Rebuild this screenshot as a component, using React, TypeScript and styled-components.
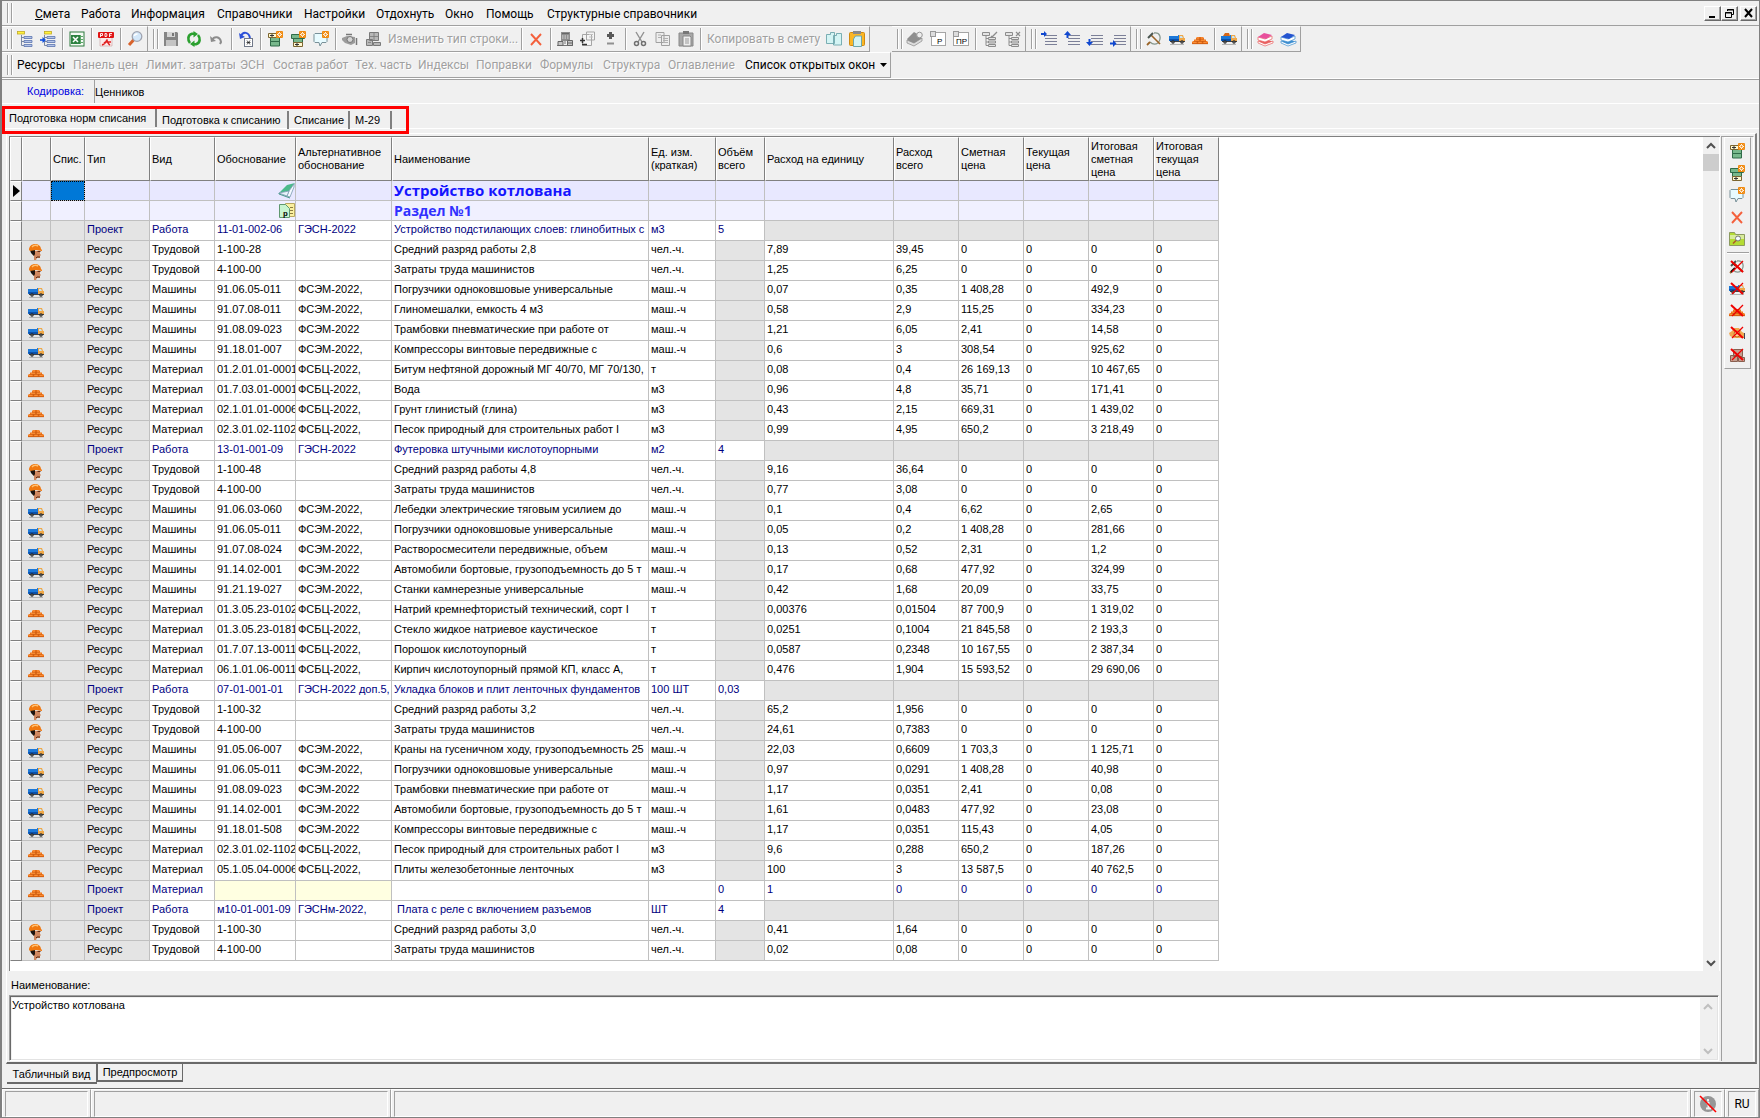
import React from "react";
import styled, { createGlobalStyle, css } from "styled-components";

const uiFont = `Roboto, "Open Sans", "Noto Sans", sans-serif`;
const gridFont = `"Liberation Sans", Arial, sans-serif`;

const Global = createGlobalStyle`
  *, *::before, *::after { box-sizing: border-box; }
  body { margin: 0; background: #f0f0f0; color: #000; font: 11px/14px ${gridFont}; }
  button, input, textarea { font: inherit; color: inherit; }
  button { border: 0; padding: 0; margin: 0; background: none; }
`;

/* ---------- icons ---------- */

const Svg = styled.svg`
  display: block;
  width: 16px;
  height: 16px;
  flex: none;
  overflow: visible;
`;

const CrossOut = () => (
  <>
    <path d="M2 2l12 11" stroke="#f00000" strokeWidth="2" />
    <path d="M14 2L3 13" stroke="#f00000" strokeWidth="1.2" />
  </>
);

const Star = () => (
  <>
    <rect x="9" y="0" width="7" height="7" rx="1" fill="#f08a10" />
    <path d="M12.500 1v5M10 3.500h5M10.800 1.800l3.400 3.400M14.200 1.800l-3.400 3.400" stroke="#fff" strokeWidth=".9" />
    <circle cx="12.500" cy="3.500" r="1" fill="#f08a10" />
  </>
);

const Truck = () => (
  <>
    <path d="M0 5h9V4h1v6H0z" fill="#1c78d8" />
    <path d="M0 8h10v2H1z" fill="#0c50a8" />
    <path d="M10 4h4l1 3h1v3h-6z" fill="#f0a848" />
    <path d="M11 5h2l1 2h-3z" fill="#c8e4f4" />
    <path d="M1 10h15v1H1z" fill="#404040" />
    <circle cx="4" cy="11" r="1.700" fill="#222" />
    <circle cx="13" cy="11" r="1.700" fill="#222" />
    <circle cx="4" cy="11" r=".6" fill="#ddd" />
    <circle cx="13" cy="11" r=".6" fill="#ddd" />
    <path d="M1 13.500h14" stroke="#b4b4b4" />
  </>
);

const Bricks = () => (
  <>
    <path d="M0 13v-2l1-1h1V8.500h2V7l1-1h6l1 1v1.500h2V10h1l1 1v2z" fill="#f4781c" />
    <path d="M0 12.700h16M2 10.400h12M4 8.300h8" stroke="#c05410" strokeWidth=".7" />
    <path d="M5.300 10.500v2M10.700 10.500v2M8 8.500v2M8 6v2" stroke="#c05410" strokeWidth=".7" />
    <path d="M1 11.300h3.500M6.500 11.300h3M11.500 11.300h3M3 9.200h4M9 9.200h4M5 7h2M9 7h2" stroke="#ff9c48" strokeWidth=".8" />
  </>
);

const Hammer = () => (
  <>
    <path d="M8 2c6-1 8 5 4 10-3 2-6 1-8-1" fill="none" stroke="#86978e" strokeWidth="1.300" />
    <path d="M5 4l9 9" stroke="#9a6428" strokeWidth="1.600" />
    <path d="M2 7l5-5" stroke="#4a5550" strokeWidth="2" />
    <path d="M4 11l-3 3" stroke="#9a6428" strokeWidth="1.800" />
  </>
);

const Rows = ({ last }: { last?: boolean }) => (
  <>
    <path d={last ? "M1.500 3.500h13v4h-13zM3.500 7.500h9v4h-9z" : "M3.500 6.500h9v4h-9zM3.500 10.500h9v4.500h-9z"} fill="#78b88c" stroke="#2f6b48" />
    <path d={last ? "M3.500 11.500h9v4h-9z" : "M1.500 2.500h13v4h-13z"} fill="#fff8d0" stroke="#7c6530" />
    <path d={last ? "M5 13.500h4M7 12v3" : "M3 4.500h4M5 3v3"} stroke="#333" />
    <Star />
  </>
);

const Worker = () => (
  <>
    <path d="M5 7h7v3l1 1-1 1v2H9l-1 2H6v-4L4 10z" fill="#d08860" />
    <path d="M2 6h5v4l-1 2-3-3z" fill="#1c1410" />
    <path d="M1 6c0-4 3-6 6-6s6 2 6 5l1 1v1l-6-1-6 1z" fill="#f07810" />
    <path d="M4 3c2-2 4-2 6-1" stroke="#ffc070" strokeWidth="1.500" fill="none" />
    <path d="M9.500 7.500h3M8 14l1-1h3" stroke="#5c2c18" fill="none" />
  </>
);

const Books = ({ a, b }: { a: string; b: string }) => (
  <>
    <path d="M1 10l7 4 8-3-7-3z" fill={b} />
    <path d="M1 10v2l7 3 8-3v-2l-8 3z" fill="#fff" stroke={b} strokeWidth=".7" />
    <path d="M1 6v3l7 2 7-3V5l-7 3z" fill="#fff" stroke={b} strokeWidth=".7" />
    <path d="M1 6l6-4 8 2-6 4z" fill={a} />
  </>
);

const Tree = ({ dx = 0 }: { dx?: number }) => (
  <>
    <path d="M7 5.500h8v2H7zM7 9.500h8v2H7zM7 13.500h8v2H7z" fill="#b4c4e8" stroke="#5a74b0" strokeWidth=".8" />
    <path d="M4.500 4v10.500H7M4.500 6.500H7M4.500 10.500H7" stroke="#6c7c9c" strokeWidth=".9" fill="none" />
    <rect x={0.5 + dx} y=".5" width="7" height="2.500" fill="#fff23c" stroke="#c0a828" strokeWidth=".8" />
  </>
);

const GrayTree = () => (
  <>
    <path d="M.5 1.500h7v3h-7zM6.500 6.500h7v2h-7zM6.500 10h7v2h-7zM6.500 13.500h7v2h-7z" fill="#e4e4e4" stroke="#8c8c8c" />
    <path d="M4 5v9.500h2M4 7.500h2M4 11h2" stroke="#8c8c8c" fill="none" />
  </>
);

const Lines = () => <path d="M4 4.500h12M4 7.500h12M4 10.500h12M4 13.500h12" stroke="#7c8098" />;

const icons: Record<string, React.ReactNode> = {
  tree: <Tree />,
  treeIn: (
    <>
      <Tree dx={4} />
      <path d="M0 9h4" stroke="#1050e0" strokeWidth="1.600" />
      <path d="M2.500 6l3.500 3-3.500 3z" fill="#1050e0" />
    </>
  ),
  excel: (
    <>
      <rect x="1" y="1" width="14" height="14" fill="#f5fbf5" stroke="#2c7a3c" />
      <path d="M2 4h9v9H2z" fill="#2c8240" />
      <path d="M4 6l5 5M9 6l-5 5" stroke="#fff" strokeWidth="1.500" />
      <path d="M11.500 4v9M11.500 5.500H14M11.500 8.500H14M11.500 11.500H14" stroke="#5ba568" />
    </>
  ),
  pdf: (
    <>
      <path d="M2 6h12v9H2z" fill="#fbe9e9" stroke="#c9a0a0" strokeWidth=".6" />
      <rect x="0" y="1" width="16" height="6" rx="1" fill="#e01414" />
      <path d="M2.500 6V2.500h2v2h-2M7 2.500v3h1.500l.5-1.500-.5-1.500zM11.500 6V2.500h2.500M11.500 4.300h2" stroke="#fff" fill="none" strokeWidth=".9" />
      <path d="M4 14c4-1 5-6 5-5s1 4 3 5M6 12c2-2 5-1 7-1" fill="none" stroke="#e02020" strokeWidth="1.500" />
    </>
  ),
  lens: (
    <>
      <path d="M7 8.500L2 14" stroke="#d8622c" strokeWidth="3" />
      <circle cx="10" cy="5.500" r="4.800" fill="#d4e8fa" stroke="#a0a4b0" strokeWidth="1.300" />
      <path d="M7.500 5c0-1 1-2 3-2" stroke="#fff" fill="none" strokeWidth="1.500" />
    </>
  ),
  save: (
    <>
      <path d="M1 1h13l1 1v13H1z" fill="#858585" />
      <path d="M4 1h8v5H4z" fill="#d5d5d5" />
      <path d="M3 9h10v6H3z" fill="#c4c4c4" />
      <path d="M9 2h2v3H9z" fill="#777" />
    </>
  ),
  refresh: (
    <>
      <path d="M8 2.800H6C1.500 4 1.500 9 4 12M8 13.200h2c4.500-1.200 4.500-6.200 2-9.200" fill="none" stroke="#2ba02f" strokeWidth="2.600" />
      <path d="M7.500 0l4.500 3-4.500 3.500zM8.500 9.500L4 13l4.500 3z" fill="#2ba02f" />
    </>
  ),
  undo: (
    <>
      <path d="M3 9c2-4 8-4 9 2l-1 2" fill="none" stroke="#8c8c8c" strokeWidth="2" />
      <path d="M1 5l1 6 5-1z" fill="#8c8c8c" />
    </>
  ),
  undoBox: (
    <>
      <path d="M3 5c2-5 8-4 9 2" fill="none" stroke="#2c50d8" strokeWidth="2" />
      <path d="M1 2l1 6 5-2z" fill="#2c50d8" />
      <rect x="6.500" y="7.500" width="8" height="8" fill="#fff" stroke="#707888" />
      <path d="M8.500 11.500h4M9 9.500l3 4M12 9.500l-3 4" stroke="#222" strokeWidth=".8" />
    </>
  ),
  rowAbove: <Rows />,
  rowBelow: <Rows last />,
  note: (
    <>
      <path d="M2 2.500h11l1 1v7l-1 1H9l-2 3.500-1-3.500H2l-1-1v-7z" fill="#e8fbff" stroke="#789098" />
      <Star />
    </>
  ),
  hand: (
    <>
      <path d="M0 7l5-2 8 1v6l-4 2-6-2-3-3z" fill="#9c9c9c" />
      <circle cx="8" cy="8.500" r="3" fill="#d4d4d4" stroke="#777" />
      <path d="M4 3.500h6M14.500 7v7" stroke="#777" strokeWidth="1.500" />
    </>
  ),
  bricksGray: (
    <>
      <path d="M4.500 1.500h9v8h-9zM1.500 8.500h6v6h-6zM8.500 11.500h7v3h-7z" fill="#b8b8b8" stroke="#7a7a7a" />
      <path d="M9 2v7M5 5.500h8M3 11.500h3" stroke="#7a7a7a" strokeWidth=".8" />
    </>
  ),
  x: <path d="M3 3l10 11M13 3L3 14" stroke="#f4603c" strokeWidth="1.900" fill="none" />,
  calc: (
    <>
      <path d="M4 1h9v9H4z" fill="#8c8c8c" />
      <path d="M5 2.500h7" stroke="#666" />
      <path d="M5 5h7M5 7h7" stroke="#ddd" strokeDasharray="1.500 1" />
      <path d="M8 10v3M0 14.500h16" stroke="#777" />
      <path d="M1 10.500h5v4H1zM10.500 9.500h5v5h-5zM10.500 12h5" fill="#c4c4c4" stroke="#666" />
    </>
  ),
  docs: (
    <>
      <path d="M2.500 3.500h9v11h-9zM6.500 1h8v8h-8z" fill="#f4f4f4" stroke="#a5a5a5" />
      <path d="M9 3.500h4M9 6h4" stroke="#c0c0c0" />
      <path d="M2.500 7v5M0 9.500h5M2 13.500h5" stroke="#333" strokeWidth="1.500" />
    </>
  ),
  plusMinus: (
    <>
      <path d="M7.500 1v7M4 4.500h7" stroke="#585858" strokeWidth="3" />
      <path d="M4 12.500h7" stroke="#909090" strokeWidth="2" />
    </>
  ),
  cut: (
    <>
      <path d="M4 1l6 10M12 1L6 11" stroke="#909090" strokeWidth="1.400" />
      <circle cx="4.500" cy="12.500" r="2" fill="none" stroke="#707070" strokeWidth="1.500" />
      <circle cx="11.500" cy="12.500" r="2" fill="none" stroke="#707070" strokeWidth="1.500" />
    </>
  ),
  copy: (
    <>
      <path d="M1 1.500h8v10H1zM6.500 4.500h8v10h-8z" fill="#ededed" stroke="#a0a0a0" />
      <path d="M3 4h3M3 6.500h3M8 7.500h5M8 9.500h5M8 11.500h5" stroke="#b0b0b0" />
    </>
  ),
  paste: (
    <>
      <path d="M1 2h14v13H1z" fill="#a8a8a8" stroke="#888" />
      <path d="M5 0h6v3H5z" fill="#777" />
      <path d="M5 5h7l1 1v9H5z" fill="#eee" stroke="#888" />
      <path d="M7 8h4M7 10h4M7 12h4" stroke="#999" />
    </>
  ),
  copyColor: (
    <path d="M.5 3.500h4v-2h4v11h-8zM7.500 4.500h3v-2h5v11.500h-8z" fill="#d4f4f4" stroke="#6ea6ac" strokeWidth=".9" />
  ),
  pasteColor: (
    <>
      <rect x=".5" y="1.500" width="15" height="13" rx="1" fill="#fbb726" stroke="#d08a10" />
      <path d="M4 0h8v3H4z" fill="#8a8a8a" />
      <path d="M4.500 8l2-3h6v10.500h-8z" fill="#d4f4f4" stroke="#6ea6ac" />
    </>
  ),
  pack: (
    <>
      <path d="M0 8l7-7 5 3 3 4-7 6-5-2z" fill="#8f8f8f" />
      <path d="M0 9l7 3 8-5v3l-8 5-7-3z" fill="#ddd" stroke="#888" strokeWidth=".7" />
      <circle cx="12.500" cy="4" r="2.800" fill="#eee" stroke="#999" />
    </>
  ),
  sheetP: (
    <>
      <rect x="1.500" y="1.500" width="14" height="13" fill="#fff" stroke="#a5a5a5" />
      <rect x=".5" y=".5" width="5" height="5" fill="#ddd" stroke="#999" />
      <text x="7" y="12.500" fontSize="8" fontFamily="Liberation Sans">Р</text>
    </>
  ),
  sheetPR: (
    <>
      <rect x=".5" y="1.500" width="15" height="13" fill="#fff" stroke="#a5a5a5" />
      <rect x=".5" y=".5" width="5" height="5" fill="#ddd" stroke="#999" />
      <text x="3" y="12.500" fontSize="8" fontFamily="Liberation Sans">ПР</text>
    </>
  ),
  treeEdit: (
    <>
      <GrayTree />
      <path d="M9 5l1 1 5-5" fill="none" stroke="#8c8c8c" strokeWidth="1.300" />
    </>
  ),
  treeDel: (
    <>
      <GrayTree />
      <path d="M11 1l4 4M15 1l-4 4" stroke="#8c8c8c" strokeWidth="1.200" />
    </>
  ),
  lineIn: (<><Lines /><path d="M0 3h4" stroke="#1048d0" strokeWidth="2" /><path d="M3 0l3 3-3 3z" fill="#1048d0" /></>),
  lineUp: (<><Lines /><path d="M3.500 2v5" stroke="#1048d0" strokeWidth="2" /><path d="M0 4l3.500-4L7 4z" fill="#1048d0" /></>),
  lineDown: (<><Lines /><path d="M2.500 8v4" stroke="#1048d0" strokeWidth="2" /><path d="M-1 11l3.500 4L6 11z" fill="#1048d0" /></>),
  lineEnd: (<><Lines /><path d="M0 12.500h4" stroke="#1048d0" strokeWidth="2" /><path d="M3 9l3.500 3.500L3 16z" fill="#1048d0" /></>),
  hammer: <Hammer />,
  truck: <Truck />,
  bricks: <Bricks />,
  truckLoad: (<><Truck /><path d="M2 5l2-3h4l1 3z" fill="#d86818" /></>),
  booksPink: <Books a="#e8509c" b="#e86060" />,
  booksBlue: <Books a="#2454d0" b="#3c8ed0" />,
  folder: (
    <>
      <path d="M.5 1.500h5l1 2h9v11H.5z" fill="#b4dc34" stroke="#8c9a60" />
      <path d="M1 4h14v4H1z" fill="#d8ec9c" />
      <circle cx="9" cy="7.500" r="2.500" fill="#f4fbff" stroke="#777" />
      <path d="M7 9.500L4 12.500" stroke="#b05a28" strokeWidth="1.600" />
    </>
  ),
  noHammer: (<><Hammer /><path d="M4 4l3 3M2 13l4-4" stroke="#111" strokeWidth="2" /><CrossOut /></>),
  noTruck: (<><Truck /><CrossOut /></>),
  noBricks: (<><Bricks /><CrossOut /></>),
  noMask: (
    <>
      <path d="M0 8l3-2 2-3h5l3 4 2 1v5H5L1 11z" fill="#f0a850" />
      <circle cx="8" cy="9" r="3" fill="#ffd898" stroke="#c07020" />
      <path d="M15.500 8v6" stroke="#445" />
      <CrossOut />
    </>
  ),
  noBoxes: (
    <>
      <path d="M4.500 2.500h9v7h-9zM1.500 8.500h7v6h-7zM9.500 10.500h6v4h-6z" fill="#c4a090" stroke="#8a6050" />
      <CrossOut />
    </>
  ),
  worker: <Worker />,
  book: (
    <>
      <path d="M0 10L8 2l8-2-6 8z" fill="#4cba8c" />
      <path d="M10 8l5-7v3l-4 10-3-1z" fill="#f4faff" stroke="#7a98b0" strokeWidth=".8" />
      <path d="M0 10l10-2-2 5z" fill="#e8f4fa" stroke="#7a98b0" strokeWidth=".8" />
      <path d="M0 10v1l11 4" stroke="#48988a" fill="none" />
    </>
  ),
  section: (
    <>
      <path d="M6.500.5h9v13h-9z" fill="#fbf0a0" stroke="#b8a860" />
      <path d="M11 4.500h3M11 7.500h3M11 10.500h3" stroke="#8c7c40" />
      <path d="M.5 1.500h6l4 4v9H.5z" fill="#c8f4d0" stroke="#609870" />
      <text x="4" y="12.500" fontSize="8" fontWeight="700" fontFamily="Liberation Mono">р</text>
    </>
  ),
};

const Icon = ({ name }: { name: string }) => (
  <Svg viewBox="0 0 16 16" aria-hidden="true">{icons[name]}</Svg>
);

/* ---------- window shell ---------- */

const Window = styled.div`
  min-height: 100vh;
  display: flex;
  flex-direction: column;
  border: 1px solid #808080;
  border-left-width: 2px;
  background: #f0f0f0;
`;

const Grip = styled.span`
  flex: none;
  width: 5px;
  margin: 2px 2px 2px 5px;
  border: solid #a0a0a0;
  border-width: 0 1px;
  box-shadow: inset 1px 0 #fff, 1px 0 #fff;
`;

const MenuBar = styled.nav`
  display: flex;
  height: 25px;
  border-bottom: 1px solid #a0a0a0;
  font: 12px/16px ${uiFont};
`;

const MenuItems = styled.div`
  display: flex;
  flex: 1;
  align-items: center;
  padding: 1px 0 0 15px;
`;

const MenuItem = styled.button<{ $w: number }>`
  width: ${(p) => p.$w}px;
  padding-left: 6px;
  text-align: left;
  white-space: nowrap;
`;

const WindowButtons = styled.div`
  display: flex;
  align-items: center;
  padding: 1px 2px 0 0;
`;

const WindowButton = styled.button<{ $apart?: boolean }>`
  width: 17px;
  height: 15px;
  margin-left: ${(p) => (p.$apart ? 2 : 0)}px;
  border: 1px solid;
  border-color: #fff #696969 #696969 #fff;
  box-shadow: inset -1px -1px #a0a0a0;
  display: grid;
  place-items: center;
  svg { width: 11px; height: 11px; }
`;

const ToolRow = styled.div`
  display: flex;
  height: 26px;
`;

const Band = styled.div<{ $apart?: boolean }>`
  display: flex;
  margin-left: ${(p) => (p.$apart ? 22 : 0)}px;
  border: 1px solid #a0a0a0;
  border-top-color: #fff;
  border-left: 0;
  font: 12px/16px ${uiFont};
`;

const ToolButton = styled.button`
  width: 23px;
  padding-left: 3px;
  display: flex;
  align-items: center;
`;

const TextButton = styled.button<{ $w: number }>`
  width: ${(p) => p.$w}px;
  padding-left: 3px;
  display: flex;
  align-items: center;
  gap: 5px;
  text-align: left;
  white-space: nowrap;
  &:disabled { color: #a0a0a0; text-shadow: 1px 1px #fff; }
  svg { width: 7px; height: 4px; }
`;

const Divider = styled.span<{ $flat?: boolean }>`
  flex: none;
  ${(p) =>
    p.$flat
      ? css`height: 2px; margin: 2px 1px; border-top: 1px solid #a0a0a0; border-bottom: 1px solid #fff;`
      : css`width: 2px; margin: 1px 2px; border-left: 1px solid #a0a0a0; border-right: 1px solid #fff;`}
`;

const EncodingRow = styled.div`
  display: flex;
  height: 26px;
  border-top: 1px solid #fff;
  border-bottom: 1px solid #fff;
  box-shadow: inset 0 1px #a0a0a0;
  padding: 1px 0 0 25px;
`;

const EncodingLabel = styled.label`
  width: 67px;
  line-height: 23px;
  color: #0000e0;
`;

const EncodingInput = styled.input`
  width: 240px;
  border: 0;
  border-left: 1px solid #a0a0a0;
  padding: 0;
  background: transparent;
  outline: 0;
`;

const TabStrip = styled.div`
  position: relative;
  display: flex;
  height: 25px;
  padding-left: 2px;
  border-bottom: 1px solid #fff;
  font-size: 11px;
`;

const Tab = styled.button<{ $w: number; $on?: boolean }>`
  width: ${(p) => p.$w}px;
  height: 18px;
  margin-top: ${(p) => (p.$on ? 5 : 7)}px;
  padding-left: 5px;
  border-right: 2px solid #808080;
  text-align: left;
  white-space: nowrap;
`;

const Highlight = styled.div`
  position: absolute;
  z-index: 1;
  left: 0;
  top: 2px;
  width: 407px;
  height: 28px;
  border: 3px solid #ff0000;
  pointer-events: none;
`;

const Panel = styled.main`
  flex: 1;
  display: flex;
  min-height: 0;
  margin: 4px 2px 0 4px;
  padding: 2px 1px 1px 2px;
  border: solid;
  border-width: 1px 2px 2px 1px;
  border-color: #fff #808080 #696969 #fff;
`;

const Content = styled.div`
  flex: 1;
  min-width: 0;
  display: flex;
  flex-direction: column;
`;

const GridBox = styled.div`
  flex: 1;
  display: flex;
  border-top: 1px solid #808080;
  border-left: 1px solid #808080;
  background: #fff;
`;

const GridArea = styled.div`
  flex: 1;
  min-width: 0;
  overflow: hidden;
`;

const ScrollTrack = styled.div`
  width: 16px;
  margin-right: 1px;
  display: flex;
  flex-direction: column;
  background: #f0f0f0;
`;

const ScrollArrow = styled.button<{ $dim?: boolean; $end?: boolean }>`
  height: 17px;
  margin-top: ${(p) => (p.$end ? "auto" : 0)};
  display: grid;
  place-items: center;
  color: ${(p) => (p.$dim ? "#bfbfbf" : "#505050")};
  svg { width: 8px; height: 8px; }
`;

const ScrollThumb = styled.div`
  height: 17px;
  background: #cdcdcd;
`;

/* ---------- grid ---------- */

const Table = styled.table`
  width: 1209px;
  table-layout: fixed;
  border-collapse: separate;
  border-spacing: 0;
`;

const Th = styled.th`
  height: 44px;
  padding: 0 0 0 1px;
  border: 1px solid;
  border-color: #fff #808080 #808080 #fff;
  background: #f0f0f0;
  font-weight: 400;
  line-height: 13px;
  text-align: left;
  white-space: nowrap;
`;

type Tone = "gray" | "yellow" | "head" | "sub" | "white";
const tones: Record<Tone, string> = {
  gray: "#e4e4e4",
  yellow: "#ffffe1",
  head: "#e8e8ff",
  sub: "#f0f0ff",
  white: "#fff",
};

const Td = styled.td<{ $tone?: Tone; $focus?: boolean }>`
  height: 20px;
  padding: 0 0 2px 2px;
  overflow: hidden;
  border: solid #c0c0c0;
  border-width: 0 1px 1px 0;
  background: ${(p) => tones[p.$tone ?? "white"]};
  line-height: 17px;
  white-space: pre;
  ${(p) => p.$focus && css`background: #0078d7; outline: 1px dotted #000; outline-offset: -1px;`}
`;

const Marker = styled.td`
  height: 20px;
  padding: 0 0 0 2px;
  border: 1px solid;
  border-color: #fff #808080 #808080 #f0f0f0;
  background: #f0f0f0;
  svg { width: 7px; height: 12px; }
`;

const IconTd = styled(Td)<{ $end?: boolean }>`
  padding: ${(p) => (p.$end ? "0" : "2px 0 0")};
  svg { margin: ${(p) => (p.$end ? "0 0 0 auto" : "0 auto")}; }
`;

const Row = styled.tr<{ $work?: boolean }>`
  color: ${(p) => (p.$work ? "#000080" : "#000")};
`;

const TitleTd = styled(Td)<{ $sub?: boolean }>`
  padding-bottom: 0;
  overflow: visible;
  color: ${(p) => (p.$sub ? "#3030ff" : "#1414ff")};
  font: 700 ${(p) => (p.$sub ? 14 : 15)}px/19px "Open Sans", "Noto Sans", sans-serif;
`;

const columns: [string, number][] = [
  ["", 12], ["", 29], ["Спис.", 34], ["Тип", 65], ["Вид", 65], ["Обоснование", 81],
  ["Альтернативное\nобоснование", 96], ["Наименование", 257], ["Ед. изм.\n(краткая)", 67],
  ["Объём\nвсего", 49], ["Расход на единицу", 129], ["Расход\nвсего", 65], ["Сметная\nцена", 65],
  ["Текущая\nцена", 65], ["Итоговая\nсметная\nцена", 65], ["Итоговая\nтекущая\nцена", 65],
];

/* kind | code | alternative | name | unit | volume or per-unit | total | price | sum */
const data = `W|11-01-002-06|ГЭСН-2022|Устройство подстилающих слоев: глинобитных с|м3|5
L|1-100-28||Средний разряд работы 2,8|чел.-ч.|7,89|39,45|0|0
L|4-100-00||Затраты труда машинистов|чел.-ч.|1,25|6,25|0|0
T|91.06.05-011|ФСЭМ-2022,|Погрузчики одноковшовые универсальные|маш.-ч|0,07|0,35|1 408,28|492,9
T|91.07.08-011|ФСЭМ-2022,|Глиномешалки, емкость 4 м3|маш.-ч|0,58|2,9|115,25|334,23
T|91.08.09-023|ФСЭМ-2022|Трамбовки пневматические при работе от|маш.-ч|1,21|6,05|2,41|14,58
T|91.18.01-007|ФСЭМ-2022,|Компрессоры винтовые передвижные с|маш.-ч|0,6|3|308,54|925,62
M|01.2.01.01-0001|ФСБЦ-2022,|Битум нефтяной дорожный МГ 40/70, МГ 70/130,|т|0,08|0,4|26 169,13|10 467,65
M|01.7.03.01-0001|ФСБЦ-2022,|Вода|м3|0,96|4,8|35,71|171,41
M|02.1.01.01-0006|ФСБЦ-2022,|Грунт глинистый (глина)|м3|0,43|2,15|669,31|1 439,02
M|02.3.01.02-1102|ФСБЦ-2022,|Песок природный для строительных работ I|м3|0,99|4,95|650,2|3 218,49
W|13-01-001-09|ГЭСН-2022|Футеровка штучными кислотоупорными|м2|4
L|1-100-48||Средний разряд работы 4,8|чел.-ч.|9,16|36,64|0|0
L|4-100-00||Затраты труда машинистов|чел.-ч.|0,77|3,08|0|0
T|91.06.03-060|ФСЭМ-2022,|Лебедки электрические тяговым усилием до|маш.-ч|0,1|0,4|6,62|2,65
T|91.06.05-011|ФСЭМ-2022,|Погрузчики одноковшовые универсальные|маш.-ч|0,05|0,2|1 408,28|281,66
T|91.07.08-024|ФСЭМ-2022,|Растворосмесители передвижные, объем|маш.-ч|0,13|0,52|2,31|1,2
T|91.14.02-001|ФСЭМ-2022|Автомобили бортовые, грузоподъемность до 5 т|маш.-ч|0,17|0,68|477,92|324,99
T|91.21.19-027|ФСЭМ-2022,|Станки камнерезные универсальные|маш.-ч|0,42|1,68|20,09|33,75
M|01.3.05.23-0102|ФСБЦ-2022,|Натрий кремнефтористый технический, сорт I|т|0,00376|0,01504|87 700,9|1 319,02
M|01.3.05.23-0181|ФСБЦ-2022,|Стекло жидкое натриевое каустическое|т|0,0251|0,1004|21 845,58|2 193,3
M|01.7.07.13-0011|ФСБЦ-2022,|Порошок кислотоупорный|т|0,0587|0,2348|10 167,55|2 387,34
M|06.1.01.06-0011|ФСБЦ-2022,|Кирпич кислотоупорный прямой КП, класс А,|т|0,476|1,904|15 593,52|29 690,06
W|07-01-001-01|ГЭСН-2022 доп.5,|Укладка блоков и плит ленточных фундаментов|100 ШТ|0,03
L|1-100-32||Средний разряд работы 3,2|чел.-ч.|65,2|1,956|0|0
L|4-100-00||Затраты труда машинистов|чел.-ч.|24,61|0,7383|0|0
T|91.05.06-007|ФСЭМ-2022,|Краны на гусеничном ходу, грузоподъемность 25|маш.-ч|22,03|0,6609|1 703,3|1 125,71
T|91.06.05-011|ФСЭМ-2022,|Погрузчики одноковшовые универсальные|маш.-ч|0,97|0,0291|1 408,28|40,98
T|91.08.09-023|ФСЭМ-2022|Трамбовки пневматические при работе от|маш.-ч|1,17|0,0351|2,41|0,08
T|91.14.02-001|ФСЭМ-2022|Автомобили бортовые, грузоподъемность до 5 т|маш.-ч|1,61|0,0483|477,92|23,08
T|91.18.01-508|ФСЭМ-2022|Компрессоры винтовые передвижные с|маш.-ч|1,17|0,0351|115,43|4,05
M|02.3.01.02-1102|ФСБЦ-2022,|Песок природный для строительных работ I|м3|9,6|0,288|650,2|187,26
M|05.1.05.04-0006|ФСБЦ-2022,|Плиты железобетонные ленточных|м3|100|3|13 587,5|40 762,5
P||||||1|0|0|0
W|м10-01-001-09|ГЭСНм-2022,| Плата с реле с включением разъемов|ШТ|4
L|1-100-30||Средний разряд работы 3,0|чел.-ч.|0,41|1,64|0|0
L|4-100-00||Затраты труда машинистов|чел.-ч.|0,02|0,08|0|0`.split("\n").map((line) => line.split("|"));

const kinds: Record<string, { type: string; view: string; icon?: string }> = {
  W: { type: "Проект", view: "Работа" },
  P: { type: "Проект", view: "Материал", icon: "bricks" },
  L: { type: "Ресурс", view: "Трудовой", icon: "worker" },
  T: { type: "Ресурс", view: "Машины", icon: "truck" },
  M: { type: "Ресурс", view: "Материал", icon: "bricks" },
};

const DataRow = ({ cells }: { cells: string[] }) => {
  const [kind, code, alt, name, unit] = cells;
  const { type, view, icon } = kinds[kind];
  const work = kind === "W";
  const own = kind === "P";
  const [perUnit, total, price, sum] = work ? [] : cells.slice(own ? 6 : 5);
  const volume = work ? cells[5] : own ? "0" : "";
  const codeTone: Tone = own ? "yellow" : "white";
  const numbers = [perUnit, total, price, work ? "" : "0", sum, work ? "" : "0"];
  return (
    <Row $work={work || own}>
      <Marker />
      <IconTd $tone="gray">{icon && <Icon name={icon} />}</IconTd>
      <Td $tone="gray" />
      <Td $tone="gray">{type}</Td>
      <Td>{view}</Td>
      <Td $tone={codeTone}>{code}</Td>
      <Td $tone={codeTone}>{alt}</Td>
      <Td>{name}</Td>
      <Td>{unit}</Td>
      <Td $tone={volume ? "white" : "gray"}>{volume}</Td>
      {numbers.map((n, i) => (
        <Td key={i} $tone={work ? "gray" : "white"}>{n}</Td>
      ))}
    </Row>
  );
};

const GroupRow = ({ title, icon, tone, current }: { title: string; icon: string; tone: Tone; current?: boolean }) => (
  <Row>
    <Marker>
      {current && <Svg viewBox="0 0 7 12"><path d="M0 0l7 6-7 6z" /></Svg>}
    </Marker>
    <Td $tone={tone} />
    <Td $tone={tone} $focus={current} />
    <Td $tone={tone} />
    <Td $tone={tone} />
    <IconTd $tone={tone} $end><Icon name={icon} /></IconTd>
    <Td $tone={tone} />
    <TitleTd $tone={tone} $sub={!current}>{title}</TitleTd>
    {columns.slice(8).map((_, i) => <Td key={i} $tone={tone} />)}
  </Row>
);

/* ---------- lower area ---------- */

const NameLabel = styled.label`
  height: 24px;
  padding: 7px 2px 0;
`;

const MemoBox = styled.div`
  display: flex;
  height: 66px;
  border: 1px solid;
  border-color: #a0a0a0 #fff #fff #a0a0a0;
  box-shadow: inset 1px 1px #696969, inset -1px -1px #e3e3e3;
  padding: 2px 1px 1px 2px;
  margin-right: 1px;
`;

const Memo = styled.textarea`
  flex: 1;
  border: 0;
  padding: 0;
  resize: none;
  outline: 0;
  background: #fff;
  line-height: 14px;
`;

const SideDock = styled.aside`
  width: 33px;
  border-left: 1px solid #a0a0a0;
  border-right: 1px solid #fff;
  border-top: 1px solid #a0a0a0;
  margin-left: 1px;
  padding: 0 2px;
`;

const SideBar = styled.div`
  display: flex;
  flex-direction: column;
  width: 27px;
  padding: 2px 0 2px 1px;
  border: 1px solid;
  border-color: #fff #a0a0a0 #a0a0a0 #fff;
`;

const SideButton = styled.button`
  height: 22px;
  padding-left: 3px;
`;

const LowerTabs = styled.div`
  display: flex;
  align-items: flex-start;
  height: 24px;
  padding-left: 5px;
`;

const LowerTab = styled.button<{ $w: number; $on?: boolean }>`
  width: ${(p) => p.$w}px;
  height: ${(p) => (p.$on ? 20 : 18)}px;
  padding-top: ${(p) => (p.$on ? 2 : 0)}px;
  border: solid #696969;
  border-width: 0 1px 2px 0;
  border-left: ${(p) => (p.$on ? "0" : "1px solid #696969")};
  text-align: center;
`;

const StatusBar = styled.footer`
  display: flex;
  height: 29px;
  border-top: 1px solid #696969;
  font: 12px/16px ${uiFont};
`;

const StatusCell = styled.div<{ $w?: number }>`
  ${(p) => (p.$w ? css`width: ${p.$w}px;` : css`flex: 1;`)}
  padding: 1px 2px;
  border: solid;
  border-width: 1px 1px 0 1px;
  border-color: #fff #a0a0a0 #fff #fff;
`;

const StatusInset = styled.div`
  height: 26px;
  display: grid;
  place-items: center;
  border: 1px solid;
  border-color: #a0a0a0 #fff #fff #a0a0a0;
`;

/* ---------- page ---------- */

const Tools = ({ items }: { items: string }) => (
  <>
    {items.split(" ").map((name, i) =>
      name === "|" ? <Divider key={i} /> : <ToolButton key={i} aria-label={name}><Icon name={name} /></ToolButton>
    )}
  </>
);

const menus: [string, number][] = [
  ["Работа", 50], ["Информация", 86], ["Справочники", 87], ["Настройки", 72],
  ["Отдохнуть", 69], ["Окно", 41], ["Помощь", 61], ["Структурные справочники", 160],
];

const panels: [string, number][] = [
  ["Панель цен", 73], ["Лимит. затраты", 94], ["ЭСН", 33], ["Состав работ", 82], ["Тех. часть", 63],
  ["Индексы", 58], ["Поправки", 64], ["Формулы", 63], ["Структура", 65], ["Оглавление", 77],
];

const Arrow = ({ down }: { down?: boolean }) => (
  <Svg viewBox="0 0 8 8"><path d={down ? "M0 2l4 4 4-4" : "M0 6l4-4 4 4"} fill="none" stroke="currentColor" strokeWidth="2" /></Svg>
);

export default function App() {
  return (
    <Window>
      <Global />
      <MenuBar>
        <Grip />
        <MenuItems>
          <MenuItem $w={46}><u>С</u>мета</MenuItem>
          {menus.map(([label, w]) => <MenuItem key={label} $w={w}>{label}</MenuItem>)}
        </MenuItems>
        <WindowButtons>
          <WindowButton aria-label="Свернуть">
            <Svg viewBox="0 0 11 11"><path d="M2 9h6" stroke="#000" strokeWidth="2" /></Svg>
          </WindowButton>
          <WindowButton aria-label="Восстановить">
            <Svg viewBox="0 0 11 11">
              <path d="M3.500 3V1.500h6v5H8M3 2h7" fill="none" stroke="#000" />
              <path d="M1.500 4.500h6v5h-6zM1 5h7" fill="none" stroke="#000" />
            </Svg>
          </WindowButton>
          <WindowButton aria-label="Закрыть" $apart>
            <Svg viewBox="0 0 11 11"><path d="M2 1l7 8M9 1L2 9" stroke="#000" strokeWidth="2" /></Svg>
          </WindowButton>
        </WindowButtons>
      </MenuBar>

      <ToolRow>
        <Band><Grip /><Tools items="tree treeIn | excel | pdf | lens" /></Band>
        <Band>
          <Grip />
          <Tools items="save refresh undo | undoBox | rowAbove rowBelow note | hand bricksGray" />
          <TextButton $w={134} disabled>Изменить тип строки...</TextButton>
          <Tools items="| x | calc docs plusMinus | cut copy paste |" />
          <TextButton $w={119} disabled>Копировать в смету</TextButton>
          <Tools items="copyColor pasteColor" />
        </Band>
        <Band $apart><Grip /><Tools items="pack sheetP sheetPR | treeEdit treeDel" /></Band>
        <Band><Grip /><Tools items="lineIn lineUp lineDown lineEnd" /></Band>
        <Band><Grip /><Tools items="hammer truck bricks | truckLoad" /></Band>
        <Band><Grip /><Tools items="booksPink booksBlue" /></Band>
      </ToolRow>

      <ToolRow>
        <Band>
          <Grip />
          <TextButton $w={56}>Ресурсы</TextButton>
          {panels.map(([label, w]) => <TextButton key={label} $w={w} disabled>{label}</TextButton>)}
          <TextButton $w={148}>
            Список открытых окон
            <Svg viewBox="0 0 7 4"><path d="M0 0h7L3.500 4z" /></Svg>
          </TextButton>
        </Band>
      </ToolRow>

      <EncodingRow>
        <EncodingLabel htmlFor="encoding">Кодировка:</EncodingLabel>
        <EncodingInput id="encoding" defaultValue="Ценников" />
      </EncodingRow>

      <TabStrip role="tablist">
        <Tab role="tab" aria-selected $w={153} $on>Подготовка норм списания</Tab>
        <Tab role="tab" $w={132}>Подготовка к списанию</Tab>
        <Tab role="tab" $w={61}>Списание</Tab>
        <Tab role="tab" $w={42}>М-29</Tab>
        <Highlight />
      </TabStrip>

      <Panel>
        <Content>
          <GridBox>
            <GridArea>
              <Table>
                <colgroup>{columns.map(([, w], i) => <col key={i} width={w} />)}</colgroup>
                <thead>
                  <tr>
                    {columns.map(([label], i) => (
                      <Th key={i} scope="col">
                        {label.split("\n").map((part, j) => <div key={j}>{part}</div>)}
                      </Th>
                    ))}
                  </tr>
                </thead>
                <tbody>
                  <GroupRow title="Устройство котлована" icon="book" tone="head" current />
                  <GroupRow title="Раздел №1" icon="section" tone="sub" />
                  {data.map((cells, i) => <DataRow key={i} cells={cells} />)}
                </tbody>
              </Table>
            </GridArea>
            <ScrollTrack>
              <ScrollArrow aria-label="Вверх"><Arrow /></ScrollArrow>
              <ScrollThumb />
              <ScrollArrow aria-label="Вниз" $end><Arrow down /></ScrollArrow>
            </ScrollTrack>
          </GridBox>
          <NameLabel htmlFor="memo">Наименование:</NameLabel>
          <MemoBox>
            <Memo id="memo" defaultValue="Устройство котлована" />
            <ScrollTrack>
              <ScrollArrow aria-label="Вверх" $dim><Arrow /></ScrollArrow>
              <ScrollArrow aria-label="Вниз" $dim $end><Arrow down /></ScrollArrow>
            </ScrollTrack>
          </MemoBox>
        </Content>
        <SideDock>
          <SideBar>
            {"rowAbove rowBelow note x folder".split(" ").map((n) => (
              <SideButton key={n} aria-label={n}><Icon name={n} /></SideButton>
            ))}
            <Divider $flat />
            {"noHammer noTruck noBricks noMask noBoxes".split(" ").map((n) => (
              <SideButton key={n} aria-label={n}><Icon name={n} /></SideButton>
            ))}
          </SideBar>
        </SideDock>
      </Panel>

      <LowerTabs role="tablist">
        <LowerTab role="tab" aria-selected $w={90} $on>Табличный вид</LowerTab>
        <LowerTab role="tab" $w={86}>Предпросмотр</LowerTab>
      </LowerTabs>

      <StatusBar>
        <StatusCell $w={89}><StatusInset /></StatusCell>
        <StatusCell $w={300}><StatusInset /></StatusCell>
        <StatusCell><StatusInset /></StatusCell>
        <StatusCell $w={34}>
          <StatusInset>
            <Svg viewBox="0 0 16 16">
              <circle cx="8" cy="8" r="8" fill="#969696" />
              <path d="M8 3v2.500M6.500 7h2v5M6 12.500h5" stroke="#f0f0f0" strokeWidth="2" fill="none" />
              <path d="M0 0l16 16" stroke="#f00" strokeWidth="1.600" />
            </Svg>
          </StatusInset>
        </StatusCell>
        <StatusCell $w={34}><StatusInset>RU</StatusInset></StatusCell>
      </StatusBar>
    </Window>
  );
}
